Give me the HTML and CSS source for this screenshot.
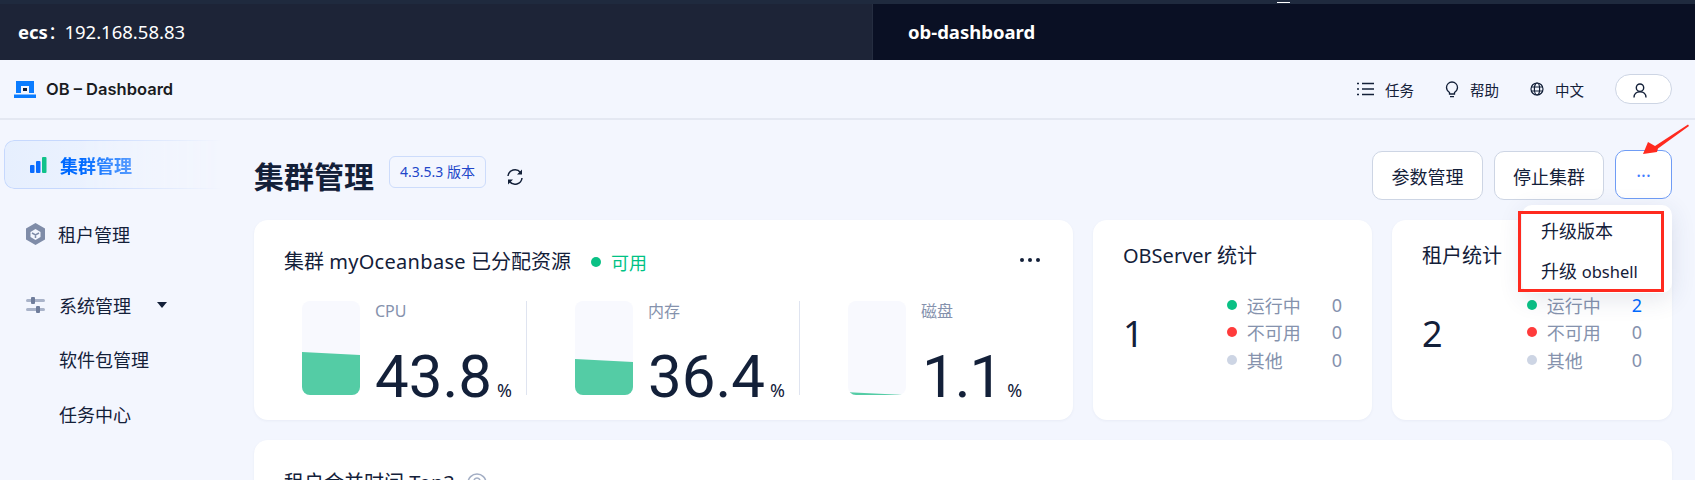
FILE: index.html
```html
<!DOCTYPE html>
<html lang="zh-CN">
<head>
    <meta charset="UTF-8">
    <title>OB-Dashboard</title>
    <link rel="stylesheet" href="styles.css">
</head>
<body>
    <div class="topbar">
        <div class="topbar-host"><b>ecs</b><span class="topbar-colon">：</span>192.168.58.83</div>
        <div class="topbar-tab">ob-dashboard</div>
    </div>

    <header class="header">
        <div class="brand">
            <svg class="brand-logo" width="22" height="17" viewBox="0 0 22 17">
                <path fill="#0a7cff" fill-rule="evenodd" d="M2 0h18v12h-5V5H7v7H2zM0 13.500h22V17H0z"/>
                <rect x="9" y="7" width="4" height="3" fill="#132039"/>
            </svg>
            <span>OB – Dashboard</span>
        </div>
        <nav class="header-nav">
            <a class="nav-item">
                <svg width="17" height="14" viewBox="0 0 17 14" fill="none" stroke="#132039" stroke-width="1.500"><path d="M5 1.500h12M5 7h12M5 12.500h12M0 1.500h2M0 7h2M0 12.500h2"/></svg>
                <span>任务</span>
            </a>
            <a class="nav-item">
                <svg width="14" height="17" viewBox="0 0 14 17" fill="none" stroke="#132039" stroke-width="1.300"><path d="M4.500 11.500C3 10.500 1.500 8.800 1.500 6.500a5.500 5.500 0 0 1 11 0c0 2.300-1.500 4-3 5v1.500h-5zM5 15.700h4"/></svg>
                <span>帮助</span>
            </a>
            <a class="nav-item">
                <svg width="14" height="14" viewBox="0 0 14 14" fill="none" stroke="#132039" stroke-width="1.200"><circle cx="7" cy="7" r="6"/><ellipse cx="7" cy="7" rx="2.600" ry="6"/><path d="M1 5h12M1 9h12"/></svg>
                <span>中文</span>
            </a>
            <button class="user-btn">
                <svg width="14" height="15" viewBox="0 0 14 15" fill="none" stroke="#132039" stroke-width="1.400"><circle cx="7" cy="4.700" r="3.700"/><path d="M1 14.500c0-3.500 2.500-5.700 6-5.700s6 2.200 6 5.700"/></svg>
            </button>
        </nav>
    </header>

    <div class="main">
        <aside class="sidebar">
            <a class="menu-item menu-active">
                <svg class="menu-icon" width="17" height="16" viewBox="0 0 17 16">
                    <rect x="0" y="8" width="4.500" height="8" rx="1" fill="#0a6cff"/>
                    <rect x="6" y="4" width="4.500" height="12" rx="1" fill="#0a6cff"/>
                    <rect x="12" y="0" width="4.500" height="16" rx="1" fill="#10c28a"/>
                </svg>
                <span>集群管理</span>
            </a>
            <a class="menu-item menu-tenant">
                <svg class="menu-icon" width="19" height="22" viewBox="0 0 19 22">
                    <path fill="#7f8ca8" fill-rule="evenodd" d="M9.500 0l9.500 5.500v11L9.500 22 0 16.500v-11zM9.500 6L4.500 9v5l5 3 5-3V9z"/>
                    <path fill="none" stroke="#7f8ca8" stroke-width="1.500" d="M6 10l3.500 2 3.500-2M9.500 12v3"/>
                </svg>
                <span>租户管理</span>
            </a>
            <a class="menu-item menu-system">
                <svg class="menu-icon" width="19" height="16" viewBox="0 0 19 16">
                    <rect x="0" y="2" width="19" height="3" rx="1.500" fill="#a9b3c9"/>
                    <rect x="5" y="0" width="4" height="7" rx="1" fill="#6f7d9b"/>
                    <rect x="0" y="11" width="19" height="3" rx="1.500" fill="#a9b3c9"/>
                    <rect x="10" y="9" width="4" height="7" rx="1" fill="#6f7d9b"/>
                </svg>
                <span>系统管理</span>
                <i class="menu-caret"></i>
            </a>
            <a class="menu-item menu-sub">软件包管理</a>
            <a class="menu-item menu-sub">任务中心</a>
        </aside>

        <section class="content">
            <div class="page-head">
                <h1 class="page-title">集群管理</h1>
                <span class="version-tag">4.3.5.3 版本</span>
                <svg class="refresh" width="18" height="18" viewBox="0 0 18 18" fill="none" stroke="#132039" stroke-width="1.500">
                    <path d="M2 8a7 7 0 0 1 12.500-3.500M16 10a7 7 0 0 1-12.500 3.500"/>
                    <path fill="#132039" stroke="none" d="M16 1.500v5h-5zM2 16.500v-5h5z"/>
                </svg>
                <div class="page-actions">
                    <button class="btn btn-text">参数管理</button>
                    <button class="btn btn-text btn-stop">停止集群</button>
                    <button class="btn btn-more">···</button>
                </div>
            </div>

            <div class="cards">
                <div class="card card-resource">
                    <div class="resource-head">
                        <span class="card-title">集群 <span class="card-name">myOceanbase</span> 已分配资源</span>
                        <i class="dot dot-big dot-green"></i>
                        <span class="status-ok">可用</span>
                        <span class="card-more">
                            <i></i><i></i><i></i>
                        </span>
                    </div>
                    <div class="gauges">
                        <div class="gauge gauge-line">
                            <div class="gauge-bar"><div class="gauge-fill" style="height: 45.7%"></div></div>
                            <div class="gauge-info">
                                <div class="gauge-label">CPU</div>
                                <div class="gauge-value">43.8<small>%</small></div>
                            </div>
                        </div>
                        <div class="gauge gauge-line">
                            <div class="gauge-bar"><div class="gauge-fill" style="height: 38.3%"></div></div>
                            <div class="gauge-info">
                                <div class="gauge-label">内存</div>
                                <div class="gauge-value">36.4<small>%</small></div>
                            </div>
                        </div>
                        <div class="gauge">
                            <div class="gauge-bar"><div class="gauge-fill gauge-fill-thin" style="height: 3%"></div></div>
                            <div class="gauge-info">
                                <div class="gauge-label">磁盘</div>
                                <div class="gauge-value gauge-value-disk">1.1<small>%</small></div>
                            </div>
                        </div>
                    </div>
                </div>

                <div class="card card-stat">
                    <div class="card-title">OBServer 统计</div>
                    <div class="stat-body">
                        <div class="stat-total">1</div>
                        <ul class="stat-list">
                            <li><i class="dot dot-green"></i><span>运行中</span><b>0</b></li>
                            <li><i class="dot dot-red"></i><span>不可用</span><b>0</b></li>
                            <li><i class="dot dot-gray"></i><span>其他</span><b>0</b></li>
                        </ul>
                    </div>
                </div>

                <div class="card card-stat">
                    <div class="card-title">租户统计</div>
                    <div class="stat-body">
                        <div class="stat-total">2</div>
                        <ul class="stat-list">
                            <li><i class="dot dot-green"></i><span>运行中</span><b class="stat-link">2</b></li>
                            <li><i class="dot dot-red"></i><span>不可用</span><b>0</b></li>
                            <li><i class="dot dot-gray"></i><span>其他</span><b>0</b></li>
                        </ul>
                    </div>
                </div>

                <div class="card card-wide">
                    <span class="card-title">租户合并时间 Top3</span>
                    <svg width="20" height="20" viewBox="0 0 20 20" fill="none" stroke="#a3aec4" stroke-width="1.500"><circle cx="10" cy="10" r="9"/><path d="M7 8a3 3 0 1 1 4.500 2.600c-1 .6-1.500 1.200-1.500 2.400"/></svg>
                </div>
            </div>
        </section>
    </div>

    <!-- dropdown and the red marks drawn over the screenshot -->
    <div class="dropdown">
        <div class="dropdown-item">升级版本</div>
        <div class="dropdown-item">升级 <span class="dropdown-latin">obshell</span></div>
    </div>
    <div class="mark-box"></div>
    <svg class="mark-arrow" width="50" height="36" viewBox="0 0 50 36">
        <path fill="#ff2a1f" d="M1 30L6 18l7 4L46 .500l1 1.500L16 24.500 15 28z"/>
    </svg>
</body>
</html>
```
FILE: styles.css
```css
* {
    box-sizing: border-box;
}

html, body {
    height: 480px;
}

body {
    margin: 0;
    overflow: hidden;
    position: relative;
    background: #f3f6fe;
    color: #132039;
    font-family: "Noto Sans", "Noto Sans CJK SC", sans-serif;
    font-size: 18px;
}

.topbar {
    display: flex;
    position: relative;
    height: 60px;
    background: #1d2437;
    border-top: 4px solid #1f2a3e;
    color: #fff;
    font-size: 18.500px;
    line-height: 56px;
}

/* stray white glyph edge at the top of the capture */
.topbar::after {
    content: "";
    position: absolute;
    top: -2px;
    left: 1277px;
    width: 13px;
    height: 1px;
    background: #fff;
}

.topbar-host {
    width: 873px;
    padding-left: 18px;
    border-right: 1px solid #252d40;
}

.topbar-colon {
    margin-right: -2px;
}

.topbar-tab {
    flex: 1;
    padding-left: 35px;
    background: #0a1024;
    font-weight: 700;
}

.header {
    display: flex;
    align-items: center;
    justify-content: space-between;
    height: 60px;
    padding: 0 23px 0 14px;
    border-bottom: 2px solid #e4e8f2;
}

.brand {
    display: flex;
    align-items: center;
    gap: 10px;
    font-family: Inter, sans-serif;
    font-size: 16.500px;
    font-weight: 600;
    color: #1a1c22;
}

.header-nav {
    display: flex;
    align-items: center;
}

.nav-item {
    display: flex;
    align-items: center;
    gap: 11px;
    margin-right: 31px;
    font-size: 14.500px;
}

.user-btn {
    display: flex;
    align-items: center;
    width: 57px;
    height: 30px;
    padding: 2px 0 0 17px;
    background: #fff;
    border: 1px solid #cdd5e4;
    border-radius: 15px;
}

.main {
    display: flex;
}

.sidebar {
    width: 254px;
    flex: none;
    padding: 20px 32px 0 4px;
}

.menu-item {
    display: flex;
    align-items: center;
    height: 24px;
}

.menu-icon {
    flex: none;
}

.menu-active {
    height: 49px;
    padding-left: 25px;
    gap: 13px;
    color: #006aff;
    font-weight: 700;
    background: linear-gradient(90deg, #e6effe, #f3f6fe);
    border: 1px solid #c6d8fd;
    border-right: none;
    border-radius: 10px 0 0 10px;
    -webkit-mask-image: linear-gradient(90deg, #000 35%, transparent);
    mask-image: linear-gradient(90deg, #000 35%, transparent);
}

.menu-tenant {
    margin-top: 33px;
    padding-left: 22px;
    gap: 13px;
}

.menu-system {
    margin-top: 47px;
    margin-bottom: -1px;
    padding-left: 22px;
    gap: 14px;
}

.menu-caret {
    width: 0;
    height: 0;
    margin-left: 12px;
    border: 5px solid transparent;
    border-top: 6px solid #132039;
    border-bottom: none;
}

.menu-sub {
    margin-top: 31px;
    padding-left: 55px;
}

.content {
    flex: 1;
    min-width: 0;
    padding-right: 23px;
}

.page-head {
    display: flex;
    align-items: center;
    height: 100px;
    padding-top: 30px;
    padding-bottom: 20px;
}

.page-title {
    margin: 4px 15px 0 0;
    font-size: 30px;
    font-weight: 700;
    line-height: 50px;
}

.version-tag {
    padding: 0 10px;
    height: 32px;
    margin-top: -6px;
    line-height: 30px;
    font-size: 14px;
    color: #2246c9;
    border: 1px solid #cddcfb;
    border-radius: 6px;
    white-space: nowrap;
}

.refresh {
    margin: 4px 0 0 20px;
}

.page-actions {
    display: flex;
    gap: 11px;
    margin-top: 1px;
    margin-left: auto;
}

.btn {
    height: 49px;
    padding: 0;
    background: #fff;
    color: #132039;
    font: inherit;
    border: 1px solid #cdd5e4;
    border-radius: 10px;
}

.btn-text {
    width: 111px;
}

.btn-stop {
    width: 110px;
}

.btn-more {
    width: 57px;
    margin-top: -1px;
    color: #3f7dff;
    border-color: #6f9cf5;
}

.cards {
    display: grid;
    grid-template-columns: 819px 279px 280px;
    grid-template-rows: 200px 200px;
    gap: 20px;
}

.card {
    background: #fff;
    border-radius: 14px;
    box-shadow: 0 1px 3px rgba(30, 50, 100, 0.05);
}

.card-title {
    font-size: 20px;
    line-height: 30px;
}

.card-name {
    letter-spacing: 0.300px;
}

.card-resource {
    padding: 27px 30px 0;
}

.resource-head {
    display: flex;
    align-items: center;
}

.dot {
    display: block;
    flex: none;
    width: 10px;
    height: 10px;
    border-radius: 50%;
}

.dot-big {
    margin: 0 10px 0 20px;
}

.dot-green {
    background: #0ac185;
}

.dot-red {
    background: #ff3b3b;
}

.dot-gray {
    background: #cdd5e4;
}

.status-ok {
    color: #00c285;
    font-size: 18px;
}

.card-more {
    display: flex;
    gap: 4px;
    margin-left: auto;
    margin-right: 3px;
    margin-top: -5px;
}

.card-more i {
    width: 4px;
    height: 4px;
    border-radius: 50%;
    background: #132039;
}

.gauges {
    display: grid;
    grid-template-columns: repeat(3, 225px);
    gap: 48px;
    margin-top: 24px;
    margin-left: 18px;
}

.gauge {
    display: flex;
    height: 94px;
}

.gauge-line {
    border-right: 1px solid #dfe4f0;
}

.gauge-bar {
    display: flex;
    align-items: flex-end;
    flex: none;
    width: 58px;
    height: 94px;
    background: #f8f9fe;
    border-radius: 8px;
    overflow: hidden;
}

.gauge-fill {
    width: 100%;
    background: #54cca5;
    clip-path: polygon(0 0, 100% 3px, 100% 100%, 0 100%);
}

.gauge-fill-thin {
    clip-path: polygon(0 0, 100% 100%, 0 100%);
}

.gauge-info {
    margin-top: -1px;
    margin-left: 15px;
}

.gauge-label {
    font-size: 16px;
    line-height: 22px;
    color: #8592ad;
}

.gauge-value {
    margin-top: 20px;
    font-family: Roboto, sans-serif;
    font-size: 60px;
    line-height: 70px;
    white-space: nowrap;
}

.gauge-value small {
    margin-left: 5px;
    font-family: "Noto Sans", sans-serif;
    font-size: 18px;
    letter-spacing: 0;
}

.gauge-value-disk {
    margin-left: 1px;
    letter-spacing: -1px;
}

.card-stat {
    padding: 21px 30px 0;
}

.stat-body {
    display: flex;
    margin-top: 21px;
}

.stat-total {
    width: 105px;
    padding-top: 17px;
    font-size: 36px;
    line-height: 50px;
}

.stat-list {
    margin: -1px 0 0;
    padding: 0;
    list-style: none;
    color: #8592ad;
}

.stat-list li {
    display: flex;
    align-items: center;
    height: 27.500px;
}

.stat-list span {
    width: 85px;
    margin-left: 10px;
}

.stat-list b {
    font-weight: 400;
}

.stat-list .stat-link {
    color: #006aff;
}

.card-wide {
    grid-column: 1 / 4;
    display: flex;
    align-items: center;
    align-self: start;
    gap: 12px;
    padding: 28px 30px;
}

.dropdown {
    position: absolute;
    top: 205px;
    left: 1522px;
    width: 150px;
    height: 88px;
    padding-top: 6px;
    background: #fff;
    border-radius: 10px;
    box-shadow: 0 6px 24px rgba(40, 60, 110, 0.12);
}

.dropdown-item {
    height: 40px;
    padding-left: 19px;
    line-height: 40px;
}

.dropdown-latin {
    font-size: 16.500px;
}

.mark-box {
    position: absolute;
    top: 211px;
    left: 1518px;
    width: 146px;
    height: 81px;
    border: 3px solid #ff2a1f;
}

.mark-arrow {
    position: absolute;
    top: 124px;
    left: 1642px;
}
```
